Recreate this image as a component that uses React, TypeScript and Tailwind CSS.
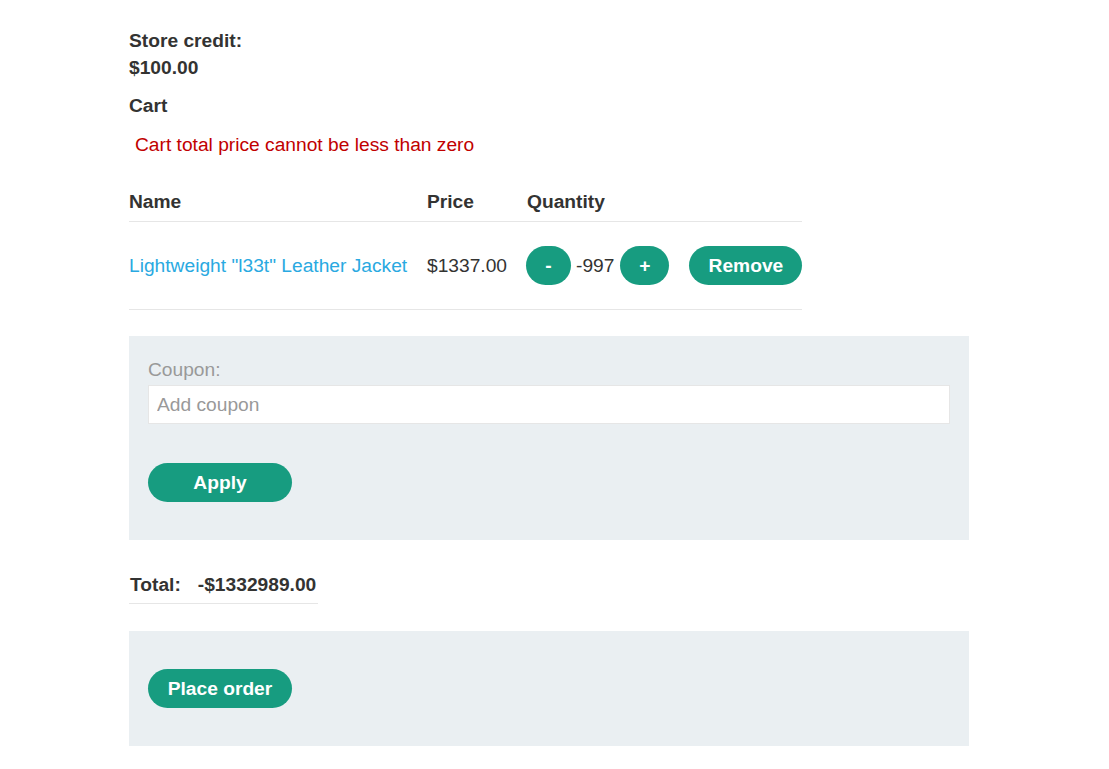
const font = { fontFamily: '"Liberation Sans", Arial, sans-serif' }

export default function App() {
  return (
    <div className="min-h-screen bg-white text-[#333332] text-[19.2px] leading-[27px]" style={font}>
      <div className="ml-[129px] w-[840px] pt-[27px] pb-[23px]">
        <p className="font-bold">Store credit:</p>
        <p className="font-bold">$100.00</p>
        <p className="font-bold mt-[11px]">Cart</p>
        <p className="mt-[12px] pl-[6px] text-[#c10000]">Cart total price cannot be less than zero</p>

        {/* Cart table */}
        <table className="mt-[30px] border-collapse text-left">
          <thead>
            <tr className="border-b border-[#e6e6e6]">
              <th className="w-[298px] pb-[6px] font-bold">Name</th>
              <th className="w-[100px] pb-[6px] font-bold">Price</th>
              <th className="w-[275px] pb-[6px] font-bold">Quantity</th>
            </tr>
          </thead>
          <tbody>
            <tr className="border-b border-[#e6e6e6]">
              <td className="py-[24px]">
                <a href="#" className="text-[#29a9e1]">Lightweight "l33t" Leather Jacket</a>
              </td>
              <td className="py-[24px]">$1337.00</td>
              <td className="py-[24px]">
                <div className="flex items-center -ml-px">
                  <button className="h-[39px] w-[45px] rounded-full bg-[#179c80] text-white font-bold">-</button>
                  <span className="ml-[5px]">-997</span>
                  <button className="ml-[6px] h-[39px] w-[49px] rounded-full bg-[#179c80] text-white font-bold">+</button>
                  <button className="ml-[20px] h-[39px] w-[113px] rounded-full bg-[#179c80] text-white font-bold">Remove</button>
                </div>
              </td>
            </tr>
          </tbody>
        </table>

        {/* Coupon */}
        <div className="mt-[26px] bg-[#eaeff2] px-[19px] pt-[20px] pb-[38px]">
          <label className="block text-[#999999]">Coupon:</label>
          <input
            placeholder="Add coupon"
            className="mt-[2px] block h-[39px] w-[802px] border border-[#e6e6e6] bg-white px-[8px] text-[19.2px] placeholder:text-[#999999] outline-none"
            style={font}
          />
          <button className="mt-[39px] h-[39px] w-[144px] rounded-full bg-[#179c80] text-white font-bold">Apply</button>
        </div>

        {/* Total */}
        <div className="mt-[31px] inline-flex w-[189px] border-b border-[#e6e6e6] pb-[5px] font-bold">
          <span className="pl-px">Total:</span>
          <span className="ml-[17px]">-$1332989.00</span>
        </div>

        <div className="mt-[27px] bg-[#eaeff2] px-[19px] pt-[38px] pb-[38px]">
          <button className="h-[39px] w-[144px] rounded-full bg-[#179c80] text-white font-bold">Place order</button>
        </div>
      </div>
    </div>
  )
}
